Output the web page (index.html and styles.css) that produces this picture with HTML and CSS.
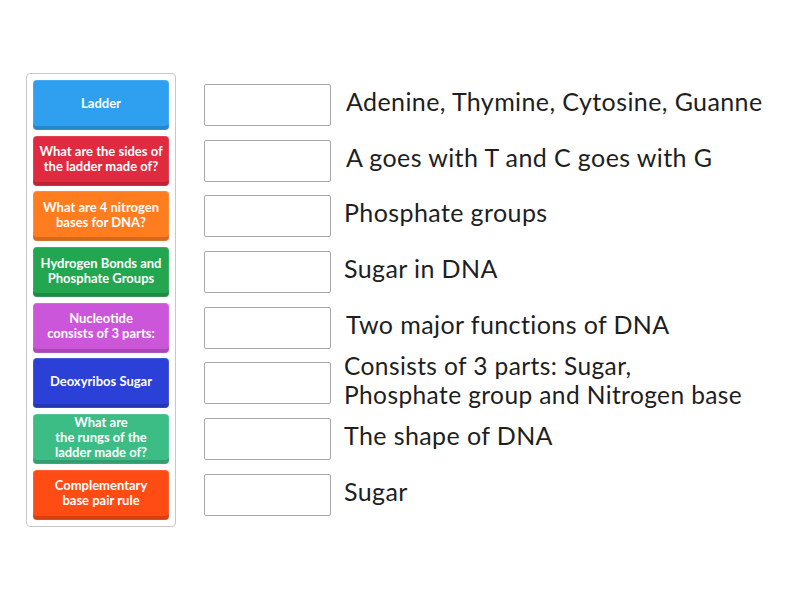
FILE: index.html
```html
<!DOCTYPE html>
<html>
<head>
<meta charset="utf-8">
<link rel="stylesheet" href="styles.css">
</head>
<body>
<div class="game">
  <div class="tray">
    <div class="tile blue">Ladder</div>
    <div class="tile red">What are the sides of the ladder made of?</div>
    <div class="tile orange">What are 4 nitrogen bases for DNA?</div>
    <div class="tile green">Hydrogen Bonds and Phosphate Groups</div>
    <div class="tile pink">Nucleotide<br>consists of 3 parts:</div>
    <div class="tile navy">Deoxyribos Sugar</div>
    <div class="tile teal">What are<br>the rungs of the<br>ladder made of?</div>
    <div class="tile redorange">Complementary<br>base pair rule</div>
  </div>
  <div class="answers">
    <div class="row"><div class="slot"></div><div class="label">Adenine, Thymine, Cytosine, Guanne</div></div>
    <div class="row"><div class="slot"></div><div class="label">A goes with T and C goes with G</div></div>
    <div class="row"><div class="slot"></div><div class="label tight">Phosphate groups</div></div>
    <div class="row"><div class="slot"></div><div class="label tight">Sugar in DNA</div></div>
    <div class="row"><div class="slot"></div><div class="label">Two major functions of DNA</div></div>
    <div class="row"><div class="slot"></div><div class="label tight twoline">Consists of 3 parts: Sugar,<br>Phosphate group and Nitrogen base</div></div>
    <div class="row"><div class="slot"></div><div class="label tight">The shape of DNA</div></div>
    <div class="row"><div class="slot"></div><div class="label tight">Sugar</div></div>
  </div>
</div>
</body>
</html>
```
FILE: styles.css
```css
html, body {
  margin: 0;
  padding: 0;
  background: #fff;
  font-family: "Lato", "Open Sans", sans-serif;
}
.game {
  display: flex;
  align-items: flex-start;
  padding: 73px 0 0 26px;
  gap: 28px;
}
.tray {
  display: flex;
  flex-direction: column;
  gap: 5.7px;
  padding: 6px;
  border: 1px solid #c8c8c8;
  border-radius: 4px;
}
.tile {
  width: 136px;
  height: 50px;
  box-sizing: border-box;
  border-radius: 4px;
  display: flex;
  align-items: center;
  justify-content: center;
  text-align: center;
  color: #fff;
  font-size: 13px;
  font-weight: 700;
  line-height: 15px;
  padding: 0 2px 3px;
  box-shadow: inset 0 -4px 0 rgba(0,0,0,0.16), inset 0 0 0 1px rgba(255,255,255,0.12);
}
.blue { background: #2f9ff0; }
.red { background: #e02a40; }
.orange { background: #ff7d1e; }
.green { background: #22a650; }
.pink { background: #cc56d9; }
.navy { background: #2b40d6; }
.teal { background: #3cbd86; }
.redorange { background: #ff4c14; }
.answers {
  display: flex;
  flex-direction: column;
  gap: 5.7px;
  padding-top: 7px;
}
.row {
  height: 50px;
  display: flex;
  align-items: center;
}
.slot {
  width: 127px;
  height: 42px;
  box-sizing: border-box;
  border: 1px solid #a8a8a8;
  border-radius: 2px;
  background: #fff;
  flex: none;
}
.label {
  margin-left: 15px;
  padding-bottom: 7px;
  font-size: 25px;
  letter-spacing: 0.4px;
  line-height: 27px;
  color: #1e1e1e;
  white-space: nowrap;
}
.label.tight {
  margin-left: 13px;
}
.label.twoline {
  font-size: 24.5px;
  line-height: 29px;
  padding-bottom: 6px;
}
```
